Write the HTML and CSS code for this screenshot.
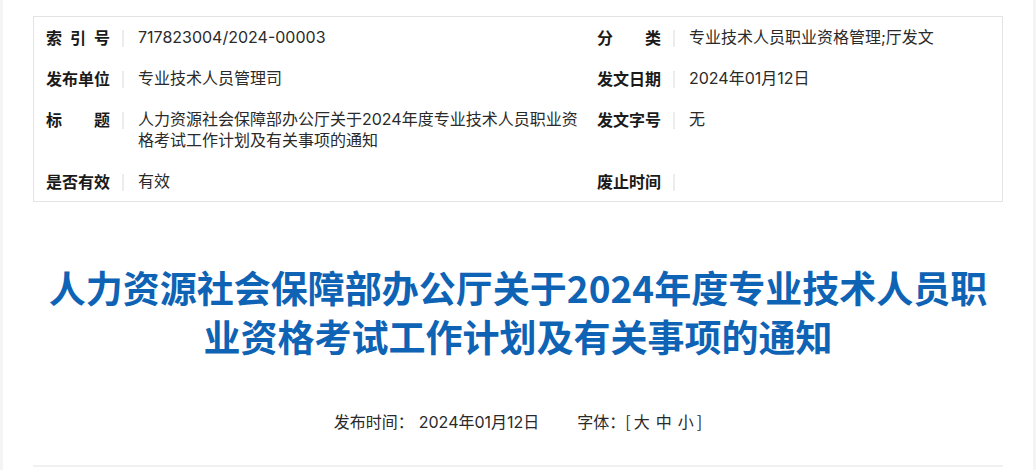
FILE: index.html
```html
<!DOCTYPE html>
<html lang="zh-CN">
<head>
<meta charset="utf-8">
<title>人力资源社会保障部办公厅关于2024年度专业技术人员职业资格考试工作计划及有关事项的通知</title>
<link rel="stylesheet" href="styles.css">
</head>
<body>
<div class="page">
  <div class="meta">
    <div class="cell">
      <span class="label">索引号</span><span class="sep"></span><span class="value">717823004/2024-00003</span>
    </div>
    <div class="cell">
      <span class="label">分类</span><span class="sep"></span><span class="value">专业技术人员职业资格管理;厅发文</span>
    </div>
    <div class="cell">
      <span class="label">发布单位</span><span class="sep"></span><span class="value">专业技术人员管理司</span>
    </div>
    <div class="cell">
      <span class="label">发文日期</span><span class="sep"></span><span class="value">2024年01月12日</span>
    </div>
    <div class="cell">
      <span class="label">标题</span><span class="sep"></span><span class="value">人力资源社会保障部办公厅关于2024年度专业技术人员职业资格考试工作计划及有关事项的通知</span>
    </div>
    <div class="cell">
      <span class="label">发文字号</span><span class="sep"></span><span class="value">无</span>
    </div>
    <div class="cell">
      <span class="label">是否有效</span><span class="sep"></span><span class="value">有效</span>
    </div>
    <div class="cell">
      <span class="label">废止时间</span><span class="sep"></span><span class="value"></span>
    </div>
  </div>

  <h1 class="title">人力资源社会保障部办公厅关于2024年度专业技术人员职业资格考试工作计划及有关事项的通知</h1>

  <div class="info">
    <span class="info-item">发布时间：<span class="date">2024年01月12日</span></span>
    <span class="info-item">字体：<span class="bracket">[</span><span class="size">大</span><span class="size">中</span><span class="size">小</span><span class="bracket">]</span></span>
  </div>

  <div class="rule"></div>
</div>
</body>
</html>
```

FILE: styles.css
```css
html, body {
  margin: 0;
  padding: 0;
}

body {
  background: #f4f4f4;
  font-family: "Noto Sans CJK SC", "Noto Sans", sans-serif;
  color: #333;
  height: 470px;
  overflow: hidden;
}

.page {
  margin: 0 3px;
  background: #fff;
  height: 470px;
  padding: 16px 30px 0;
  box-sizing: border-box;
}

.meta {
  border: 1px solid #e3e3e3;
  display: grid;
  grid-template-columns: 551px 1fr;
  row-gap: 20px;
  padding: 10px 12px 9px;
  font-size: 16px;
  line-height: 21px;
}

.cell {
  display: flex;
  align-items: flex-start;
}

.label {
  flex: none;
  width: 64px;
  font-weight: bold;
  color: #1a1a1a;
  text-align: justify;
  text-align-last: justify;
}

.sep {
  flex: none;
  width: 2px;
  height: 17px;
  margin: 3px 14px 0 12px;
  background: #ececec;
}

.value {
  flex: 1;
  padding-right: 12px;
  color: #2a2a2a;
  font-family: "Inter", "Noto Sans CJK SC", sans-serif;
}

.title {
  margin: 61px 0 0;
  text-align: center;
  color: #0f63b5;
  font-size: 37px;
  line-height: 49px;
  font-weight: bold;
}

.info {
  margin-top: 50px;
  display: flex;
  justify-content: center;
  gap: 38px;
  font-size: 16px;
  line-height: 20px;
  color: #2a2a2a;
}

.date {
  margin-left: 5px;
  font-family: "Inter", "Noto Sans CJK SC", sans-serif;
}

.size {
  margin: 0 3px;
}

.rule {
  margin-top: 33px;
  height: 2px;
  background: #f0f0f0;
}
```
